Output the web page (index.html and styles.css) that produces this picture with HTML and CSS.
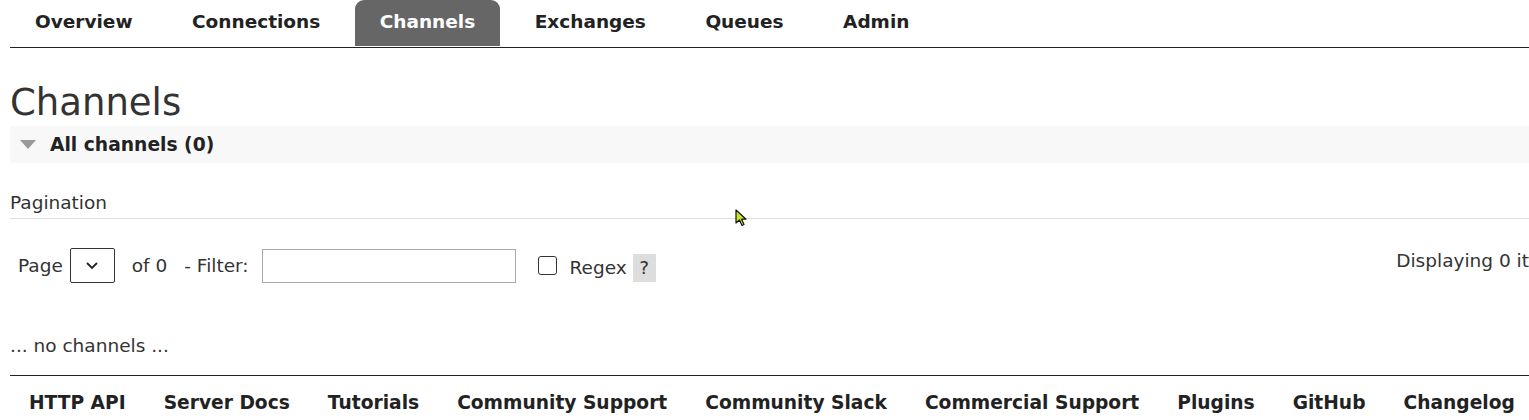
FILE: index.html
```html
<!DOCTYPE html>
<html>
<head>
<meta charset="utf-8">
<link rel="stylesheet" href="styles.css">
</head>
<body>
<div class="page">
  <ul class="tabs">
    <li class="tab">Overview</li>
    <li class="tab">Connections</li>
    <li class="tab active">Channels</li>
    <li class="tab">Exchanges</li>
    <li class="tab">Queues</li>
    <li class="tab">Admin</li>
  </ul>
  <h1 class="title">Channels</h1>
  <div class="section-head">
    <span class="tri"></span>
    <span class="section-title">All channels (0)</span>
  </div>
  <div class="pagination-label">Pagination</div>
  <div class="pager">
    <div class="pager-left">
      <span>Page</span>
      <span class="select"><svg width="14" height="9" viewBox="0 0 14 9"><path d="M2 2 L7 7 L12 2" fill="none" stroke="#222" stroke-width="1.8"/></svg></span>
      <span class="of">of 0</span>
      <span class="filter-label">- Filter:</span>
      <span class="input"></span>
      <span class="checkbox"></span>
      <span class="regex">Regex</span>
      <span class="help">?</span>
    </div>
    <div class="pager-right">Displaying 0 items</div>
  </div>
  <p class="empty">... no channels ...</p>
  <ul class="footer">
    <li>HTTP API</li>
    <li>Server Docs</li>
    <li>Tutorials</li>
    <li>Community Support</li>
    <li>Community Slack</li>
    <li>Commercial Support</li>
    <li>Plugins</li>
    <li>GitHub</li>
    <li>Changelog</li>
  </ul>
</div>
<svg class="cursor" width="14" height="20" viewBox="0 0 14 20"><path d="M1 1 L1 14 L4.5 11 L7 16.5 L9 15.5 L6.6 10.2 L11 10.2 Z" fill="#c8e62a" stroke="#111" stroke-width="1.2" stroke-linejoin="round"/></svg>
</body>
</html>
```
FILE: styles.css
```css
html, body {
  margin: 0;
  padding: 0;
  background: #fff;
  overflow: hidden;
}
body {
  font-family: "DejaVu Sans", Verdana, sans-serif;
  color: #333;
  position: relative;
  width: 1529px;
  height: 420px;
}
.page {
  width: 1576px;
  padding-left: 10px;
  box-sizing: border-box;
}
.tabs {
  list-style: none;
  margin: 0;
  padding: 0;
  display: flex;
  gap: 9.5px;
  height: 47px;
  border-bottom: 1px solid #222;
}
.tab {
  padding: 0 25px;
  height: 46px;
  line-height: 44px;
  font-weight: bold;
  font-size: 18.5px;
  color: #222;
  border-radius: 9px 9px 0 0;
}
.tab.active {
  background: #666;
  color: #fff;
}
.title {
  margin: 32px 0 0;
  font-size: 37px;
  font-weight: normal;
  line-height: 45px;
  color: #333;
}
.section-head {
  background: #f8f8f8;
  height: 37px;
  display: flex;
  align-items: center;
  margin-top: 1px;
}
.tri {
  width: 0;
  height: 0;
  border-left: 8px solid transparent;
  border-right: 8px solid transparent;
  border-top: 9px solid #999;
  margin-left: 10px;
  margin-right: 14px;
}
.section-title {
  font-weight: bold;
  font-size: 18.7px;
  color: #222;
}
.pagination-label {
  margin-top: 28px;
  font-size: 18.5px;
  padding-bottom: 3px;
  border-bottom: 1px solid #ddd;
  line-height: 24px;
}
.pager {
  display: flex;
  justify-content: space-between;
  align-items: flex-start;
  margin-top: 29px;
  font-size: 18.5px;
}
.pager-left {
  display: flex;
  align-items: center;
  padding-left: 8px;
}
.select {
  border: 1px solid #333;
  border-radius: 2px;
  margin-left: 7px;
  display: flex;
  align-items: center;
  justify-content: center;
  box-sizing: border-box;
  width: 45px;
  height: 35px;
}
.of {
  margin-left: 17px;
}
.filter-label {
  margin-left: 17px;
}
.input {
  width: 254px;
  height: 34px;
  box-sizing: border-box;
  border: 1px solid #aaa;
  margin-left: 13px;
}
.checkbox {
  width: 19px;
  height: 19px;
  box-sizing: border-box;
  border: 1.5px solid #333;
  border-radius: 3px;
  margin-left: 22px;
}
.regex {
  margin-left: 13px;
  margin-top: 4px;
}
.help {
  background: #ddd;
  width: 23px;
  height: 28px;
  display: flex;
  align-items: center;
  justify-content: center;
  margin-left: 6px;
  margin-top: 4px;
}
.pager-right {
  margin-top: 2px;
  padding-right: 8px;
}
.empty {
  margin: 51px 0 0;
  font-size: 18.5px;
  line-height: 24px;
  padding-bottom: 17px;
  border-bottom: 1px solid #222;
}
.footer {
  list-style: none;
  margin: 0;
  padding: 16px 0 0;
  display: flex;
  font-weight: bold;
  font-size: 18.65px;
  color: #222;
}
.footer li {
  padding: 0 19px;
}
.cursor {
  position: absolute;
  left: 735px;
  top: 209px;
}
```
